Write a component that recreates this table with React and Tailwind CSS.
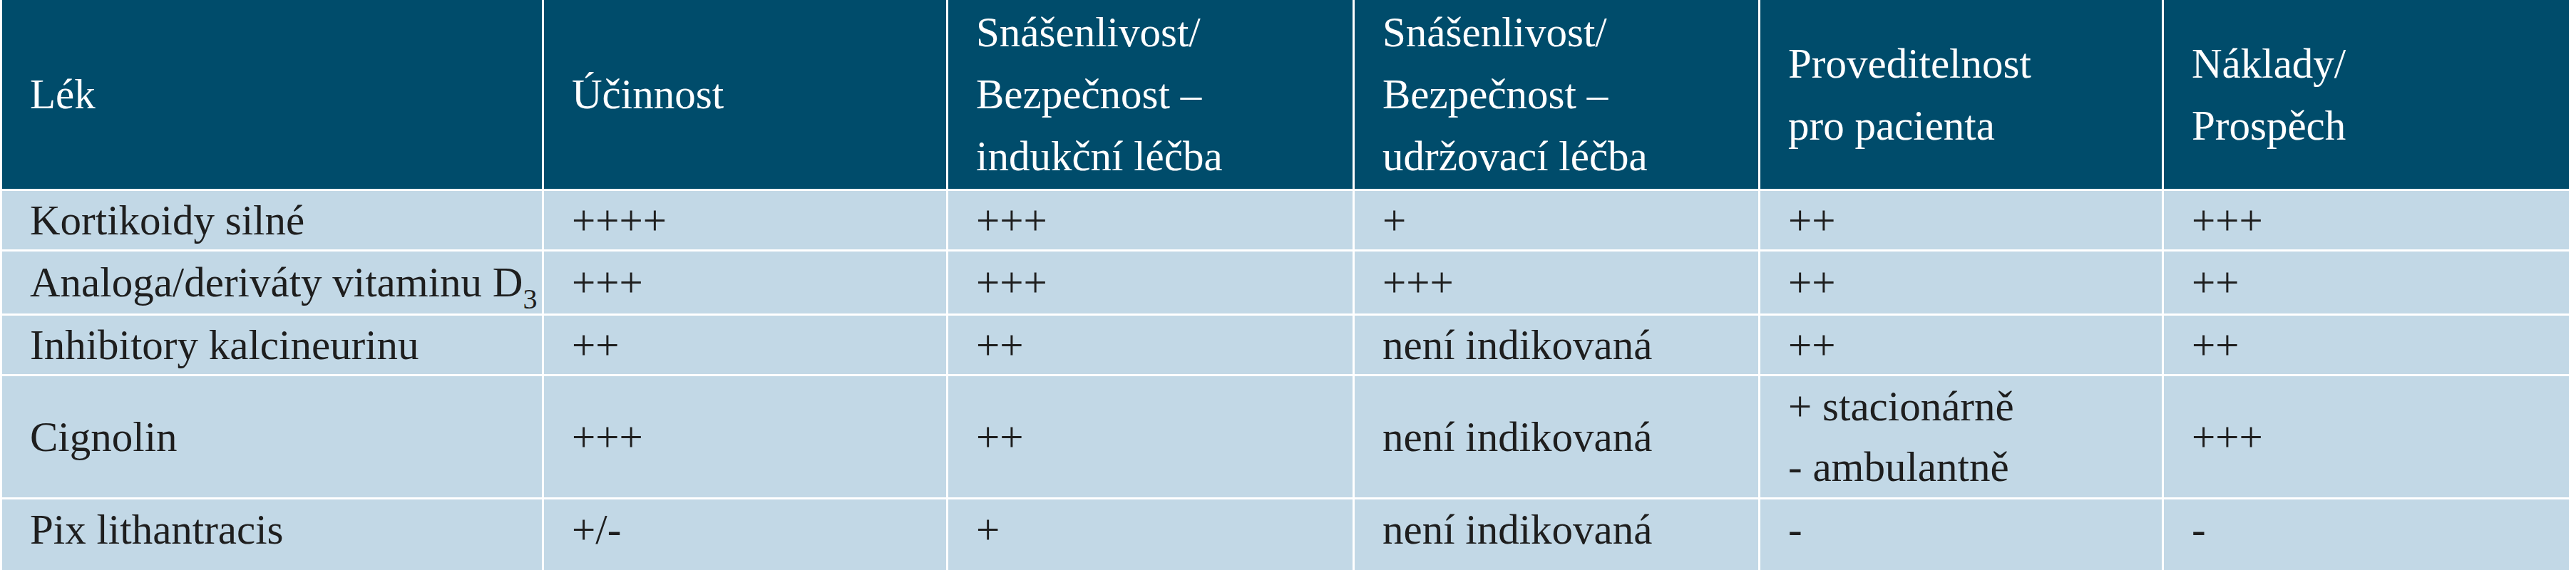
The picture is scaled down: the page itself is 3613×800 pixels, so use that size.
import React from 'react';

const headers = [
  ['Lék'],
  ['Účinnost'],
  ['Snášenlivost/', 'Bezpečnost –', 'indukční léčba'],
  ['Snášenlivost/', 'Bezpečnost –', 'udržovací léčba'],
  ['Proveditelnost', 'pro pacienta'],
  ['Náklady/', 'Prospěch'],
];

const rows = [
  ['Kortikoidy silné', '++++', '+++', '+', '++', '+++'],
  ['vitD', '+++', '+++', '+++', '++', '++'],
  ['Inhibitory kalcineurinu', '++', '++', 'není indikovaná', '++', '++'],
  ['Cignolin', '+++', '++', 'není indikovaná', ['+ stacionárně', '- ambulantně'], '+++'],
  ['Pix lithantracis', '+/-', '+', 'není indikovaná', '-', '-'],
];

const CellText = ({ value }) => {
  if (value === 'vitD') {
    return (
      <span>
        Analoga/deriváty vitaminu D
        <span className="text-[40px] leading-none align-[-17px]">3</span>
      </span>
    );
  }
  if (Array.isArray(value)) {
    return (
      <span>
        {value.map((line, i) => (
          <span key={i} className="block">{line}</span>
        ))}
      </span>
    );
  }
  return <span>{value}</span>;
};

const App = () => {
  return (
    <div className="w-[3613px] h-[800px] bg-white pl-[3px] overflow-hidden font-['Liberation_Serif',serif]">
      <div className="grid grid-cols-[757px_564px_567px_566px_563px_568px] grid-rows-[265px_82px_87px_82px_170px_99px] gap-[3px] w-[3600px]">
        {headers.map((lines, i) => (
          <div
            key={i}
            className="bg-[#004c6b] text-white text-[59px] leading-[87px] flex items-center pl-[39px]"
          >
            <div>
              {lines.map((line, j) => (
                <div key={j} className="whitespace-nowrap">{line}</div>
              ))}
            </div>
          </div>
        ))}
        {rows.map((row, r) =>
          row.map((value, c) => (
            <div
              key={r + '-' + c}
              className={
                'bg-[#c2d8e6] text-[#1e1e1e] text-[59px] leading-[85px] flex pl-[39px] whitespace-nowrap ' +
                (r === rows.length - 1 ? 'items-start' : 'items-center')
              }
            >
              <CellText value={value} />
            </div>
          ))
        )}
      </div>
    </div>
  );
};

export default App;
